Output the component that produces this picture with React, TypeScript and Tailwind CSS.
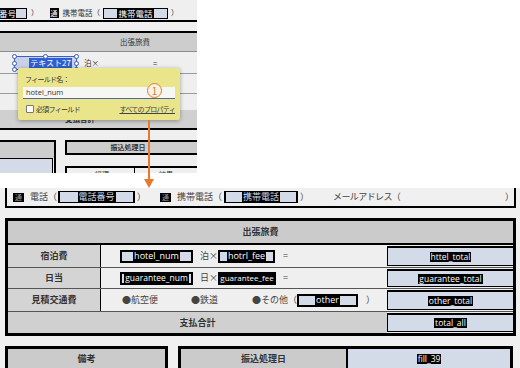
import React from 'react';

const jp = "font-['Noto_Sans_CJK_JP',sans-serif]";
const latin = "font-['Open_Sans','Noto_Sans_CJK_JP',sans-serif]";

const Mark = ({ text, className = '' }: { text: string; className?: string }) => (
  <span className={`bg-black text-white leading-[10px] px-[1px] whitespace-nowrap ${latin} ${className}`}>{text}</span>
);

const Field = ({ text, width, size = 'text-[9px]' }: { text: string; width: string; size?: string }) => (
  <div className={`h-[13px] border-2 border-black bg-[#d3dae8] flex items-center justify-center overflow-hidden ${width}`}>
    <Mark text={text} className={size} />
  </div>
);

const TotalBox = ({ text }: { text: string }) => (
  <div className="w-[126px] bg-[#efefef] py-[1px] flex">
    <div className="flex-1 border-t-2 border-b border-l border-black bg-[#d3dae8] flex items-center justify-center">
      <Mark text={text} className="text-[8.5px]" />
    </div>
  </div>
);

const Label = ({ text }: { text: string }) => (
  <div className="w-[93px] border-r border-black bg-[#d4d4d4] flex items-center justify-center text-[9px] font-bold text-[#333]">
    {text}
  </div>
);

const ContactField = ({ text, width }: { text: string; width: string }) => (
  <div className={`h-[12px] border border-x-2 border-black bg-[#d3dae8] flex items-center justify-center ${width}`}>
    <span className="bg-black text-[#cfd6e4] text-[9px] leading-[10px] px-[1px] whitespace-nowrap">{text}</span>
  </div>
);

const Badge = ({ className = '' }: { className?: string }) => (
  <div className={`w-[11px] h-[9px] bg-black text-[#9a9a9a] text-[7px] leading-none flex items-center justify-center ${className}`}>
    通
  </div>
);

const handle = 'absolute w-[5px] h-[5px] rounded-full border border-[#3559c7] bg-white';

const Callout = () => (
  <div className="w-[197px] h-[173px] bg-[#efefef] overflow-hidden relative text-[#333]">
    {/* contact row */}
    <div className="h-[20px] pt-[6px] flex items-center text-[7.5px]">
      <div className="w-[27px] h-[11px] bg-[#d3dae8] border-y border-r border-black flex">
        <div className="w-[16px] h-full bg-black text-white overflow-hidden flex justify-end items-center text-[8.5px] whitespace-nowrap">
          電話番号
        </div>
      </div>
      <span className="ml-[4px]">）</span>
      <div className="ml-[11px] w-[9px] h-[10px] bg-black text-white text-[7px] leading-none flex items-center justify-center">通</div>
      <span className="ml-[4px] whitespace-nowrap">携帯電話（</span>
      <div className="ml-[3px] w-[65px] h-[11px] border border-black bg-[#d3dae8] flex items-center justify-center">
        <span className="bg-black text-white text-[8.5px] leading-[9px] px-[1px] whitespace-nowrap">携帯電話</span>
      </div>
      <span className="ml-[3px]">）</span>
    </div>
    <div className="h-[2px] bg-black" />
    <div className="h-[9px]" />
    <div className="h-[2px] bg-black" />
    <div className="h-[18px] bg-[#cdcdcd] flex items-center pl-[120px] text-[7.5px]">出張旅費</div>
    <div className="h-px bg-[#8c8c8c]" />
    <div className="h-[21px] flex items-center text-[7.5px]">
      <div className="ml-[14px] relative w-[63px] h-[14px] border border-[#3a5fcd] bg-[#c9d1e6] flex items-center justify-end pr-[4px]">
        <span className="bg-[#2f5fd0] text-white text-[8px] leading-[10px] px-[1px] whitespace-nowrap">テキスト27</span>
        <span className={`${handle} -left-[3px] -top-[3px]`} />
        <span className={`${handle} left-[28px] -top-[3px]`} />
        <span className={`${handle} -right-[3px] -top-[3px]`} />
        <span className={`${handle} -left-[3px] top-[4px]`} />
        <span className={`${handle} -right-[3px] top-[4px]`} />
        <span className={`${handle} -left-[3px] -bottom-[3px]`} />
        <span className={`${handle} left-[28px] -bottom-[3px]`} />
        <span className={`${handle} -right-[3px] -bottom-[3px]`} />
      </div>
      <span className="ml-[7px] whitespace-nowrap">泊×</span>
      <span className="ml-[54px]">=</span>
    </div>
    <div className="h-px bg-[#9a9a9a]" />
    <div className="h-[19px]" />
    <div className="h-px bg-[#9a9a9a]" />
    <div className="h-[16px]" />
    <div className="h-[18px] bg-[#d0d0d0] flex items-center pl-[65px] text-[7.5px] font-bold">支払合計</div>
    <div className="h-[2px] bg-black" />
    <div className="h-[10px]" />
    <div className="h-[33px] flex">
      <div className="w-[56px] border-t-2 border-r-2 border-black flex flex-col">
        <div className="h-[16px] bg-[#cdcdcd]" />
        <div className="flex-1 mr-[1px] border-t border-r border-black bg-[#d3dae8]" />
      </div>
      <div className="ml-[9px] flex-1 flex flex-col">
        <div className="h-[18px] border-2 border-r-0 border-black bg-[#cdcdcd] flex items-center justify-center pr-[8px] text-[7px] font-bold">
          振込処理日
        </div>
        <div className="mt-[11px] flex-1 border-t-2 border-l-2 border-black flex text-[7px]">
          <div className="w-[68px] border-r border-black pl-[28px] pt-[1px]">経理</div>
          <div className="pl-[24px] pt-[1px]">結果</div>
        </div>
      </div>
    </div>

    {/* field popup */}
    <div className="absolute left-[18px] top-[68px] w-[162px] h-[52px] bg-[#eae58b] rounded-[2px] shadow-[0_1px_4px_rgba(0,0,0,0.35)] px-[5px] pt-[5px] text-[#333]">
      <div className="h-[12px] flex items-center pl-[2px] text-[7px] tracking-[-0.7px]">フィールド名：</div>
      <div className={`mt-[2px] h-[12px] bg-[#f6f6f4] border-b border-[#4a6a9a] flex items-center pl-[3px] text-[7.5px] ${latin}`}>
        hotel_num
      </div>
      <div className="mt-[4px] h-[12px] flex items-center">
        <div className="ml-[3px] w-[8px] h-[8px] bg-white border border-[#777] rounded-[1px]" />
        <span className="ml-[2px] text-[7px] tracking-[-0.7px]">必須フィールド</span>
        <span className="ml-auto text-[7px] tracking-[-0.7px] underline text-[#444]">すべてのプロパティ</span>
      </div>
      <div className="absolute left-[129px] top-[15px] w-[15px] h-[15px] rounded-full border border-[#e07b2a] bg-[#f6f3e8] text-[#e07b2a] text-[10px] leading-none flex items-center justify-center">
        1
      </div>
    </div>
  </div>
);

const FormView = () => (
  <div className="h-[180px] bg-[#f0f0f0] overflow-hidden text-[#444]">
    {/* contact row */}
    <div className="ml-[5px] w-[511px] h-[20px] border-x-2 border-b-2 border-black flex items-center text-[9px] whitespace-nowrap">
      <Badge className="ml-[6px]" />
      <span className="ml-[6px]">電話（</span>
      <ContactField text="電話番号" width="ml-[1px] w-[77px]" />
      <span className="ml-[2px]">）</span>
      <Badge className="ml-[14px]" />
      <span className="ml-[6px]">携帯電話（</span>
      <ContactField text="携帯電話" width="ml-[2px] w-[74px]" />
      <span className="ml-[2px]">）</span>
      <span className="ml-[24px] tracking-[-0.6px]">メールアドレス（</span>
      <span className="ml-auto w-[9px]">）</span>
    </div>

    {/* travel expense table */}
    <div className="ml-[5px] mt-[10px] w-[511px] border-[3px] border-black flex flex-col">
      <div className="h-[24px] border-b-2 border-black bg-[#cbcbcb] flex items-center justify-center text-[9px] font-bold text-[#333]">
        出張旅費
      </div>
      <div className="h-[23px] border-b border-[#555] flex">
        <Label text="宿泊費" />
        <div className="w-[286px] bg-[#efefef] flex items-center text-[9px]">
          <Field text="hotel_num" width="ml-[19px] w-[73px]" />
          <span className="ml-[7px] w-[16px] whitespace-nowrap">泊×</span>
          <Field text="hotrl_fee" width="ml-[2px] w-[57px]" />
          <span className="ml-[8px]">=</span>
        </div>
        <TotalBox text="httel_total" />
      </div>
      <div className="h-[21px] border-b border-[#555] flex">
        <Label text="日当" />
        <div className="w-[286px] bg-[#efefef] flex items-center text-[9px]">
          <Field text="guarantee_num" width="ml-[19px] w-[73px]" size="text-[8.5px]" />
          <span className="ml-[7px] w-[16px] whitespace-nowrap">日×</span>
          <Field text="guarantee_fee" width="ml-[2px] w-[58px]" size="text-[8px]" />
          <span className="ml-[7px]">=</span>
        </div>
        <TotalBox text="guarantee_total" />
      </div>
      <div className="h-[23px] border-b border-[#555] flex">
        <Label text="見積交通費" />
        <div className="w-[286px] bg-[#efefef] flex items-center text-[9px] whitespace-nowrap">
          <span className="ml-[21px]">●航空便</span>
          <span className="ml-[33px]">●鉄道</span>
          <span className="ml-[34px]">●その他（</span>
          <Field text="other" width="w-[61px]" />
          <span className="ml-[8px]">）</span>
        </div>
        <TotalBox text="other_total" />
      </div>
      <div className="h-[21px] flex">
        <div className="w-[379px] bg-[#d0d0d0] flex items-center justify-center text-[9px] font-bold text-[#333]">支払合計</div>
        <TotalBox text="total_all" />
      </div>
    </div>

    {/* notes / transfer date */}
    <div className="mt-[10px] h-[22px] flex text-[9px] font-bold text-[#333]">
      <div className="ml-[5px] w-[163px] border-[3px] border-b-0 border-black bg-[#cbcbcb] flex items-center justify-center">
        備考
      </div>
      <div className="ml-[10px] w-[335px] border-[3px] border-b-0 border-black flex">
        <div className="w-[165px] bg-[#cbcbcb] flex items-center justify-center">振込処理日</div>
        <div className="flex-1 border-l-2 border-black bg-[#d3dae8] flex items-center justify-center">
          <Mark text="fill_39" className="text-[8.5px] font-normal" />
        </div>
      </div>
    </div>
  </div>
);

export default function App() {
  return (
    <div className={`w-[520px] h-[368px] bg-white relative overflow-hidden ${jp}`}>
      <div className="h-[188px]">
        <Callout />
      </div>
      <FormView />

      {/* pointer arrow */}
      <div className="absolute left-[148px] top-[120px] w-[2px] h-[60px] bg-[#e8782a]" />
      <svg className="absolute left-[144px] top-[179px]" width="10" height="9" viewBox="0 0 10 9">
        <polygon points="0,0 10,0 5,9" fill="#e8782a" />
      </svg>
    </div>
  );
}
